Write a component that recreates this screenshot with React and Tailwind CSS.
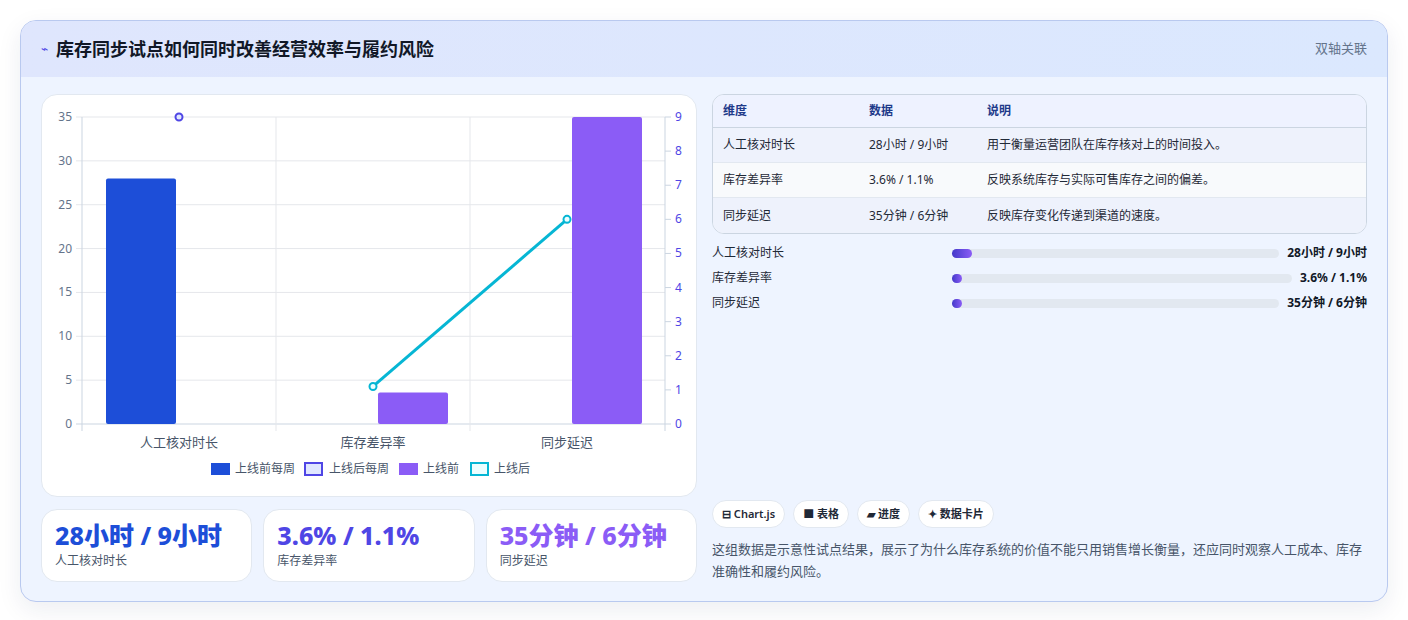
import React from "react";

const font = { fontFamily: '"Noto Sans", "Noto Sans CJK SC", sans-serif' };

const rows = [
  { k: "人工核对时长", v: "28小时 / 9小时", d: "用于衡量运营团队在库存核对上的时间投入。", w: "6%" },
  { k: "库存差异率", v: "3.6% / 1.1%", d: "反映系统库存与实际可售库存之间的偏差。", w: "2%" },
  { k: "同步延迟", v: "35分钟 / 6分钟", d: "反映库存变化传递到渠道的速度。", w: "1.5%" },
];

const Chart = () => {
  const L = 40, R = 623, T = 22, B = 329;
  const yl = (v) => B - (v / 35) * (B - T);
  const yr = (v) => B - (v / 9) * (B - T);
  const cx = [137, 331, 525];
  return (
    <svg width="656" height="403" className="block">
      {[0, 5, 10, 15, 20, 25, 30, 35].map((v) => (
        <g key={v}>
          <line x1={L - 6} x2={R} y1={yl(v)} y2={yl(v)} stroke={v === 0 ? "#cbd5e1" : "#e5e7eb"} />
          <text x={L - 10} y={yl(v) + 4} fontSize="12" textAnchor="end" fill="#64748b">{v}</text>
        </g>
      ))}
      {[0, 1, 2, 3, 4, 5, 6, 7, 8, 9].map((v) => (
        <g key={v}>
          <line x1={R} x2={R + 6} y1={yr(v)} y2={yr(v)} stroke="#cbd5e1" />
          <text x={R + 10} y={yr(v) + 4} fontSize="12" fill="#4f46e5">{v}</text>
        </g>
      ))}
      {[L, 234, 428, R].map((x) => (
        <line key={x} x1={x} x2={x} y1={T} y2={B + 7} stroke={x === L || x === R ? "#cbd5e1" : "#e5e7eb"} />
      ))}
      <rect x="64" y={yl(28)} width="70" height={B - yl(28)} fill="#1d4ed8" rx="2" />
      <rect x="336" y={yl(3.6)} width="70" height={B - yl(3.6)} fill="#8b5cf6" rx="2" />
      <rect x="530" y={yl(35)} width="70" height={B - yl(35)} fill="#8b5cf6" rx="2" />
      <line x1={cx[1]} y1={yr(1.1)} x2={cx[2]} y2={yr(6)} stroke="#06b6d4" strokeWidth="3" />
      <circle cx={cx[0]} cy={yr(9)} r="3.5" fill="#e0e7ff" stroke="#4f46e5" strokeWidth="2" />
      <circle cx={cx[1]} cy={yr(1.1)} r="3.5" fill="#ecfeff" stroke="#06b6d4" strokeWidth="2" />
      <circle cx={cx[2]} cy={yr(6)} r="3.5" fill="#ecfeff" stroke="#06b6d4" strokeWidth="2" />
      {["人工核对时长", "库存差异率", "同步延迟"].map((t, i) => (
        <text key={t} x={cx[i]} y="352" fontSize="13" textAnchor="middle" fill="#475569">{t}</text>
      ))}
      <g fontSize="12" fill="#475569">
        <rect x="169" y="368" width="19" height="12" fill="#1d4ed8" />
        <text x="193" y="378">上线前每周</text>
        <rect x="263" y="368" width="17" height="12" fill="#e0e7ff" stroke="#4f46e5" strokeWidth="2" />
        <text x="287" y="378">上线后每周</text>
        <rect x="357" y="368" width="19" height="12" fill="#8b5cf6" />
        <text x="381" y="378">上线前</text>
        <rect x="429" y="368" width="17" height="12" fill="#ecfeff" stroke="#06b6d4" strokeWidth="2" />
        <text x="452" y="378">上线后</text>
      </g>
    </svg>
  );
};

export default function App() {
  return (
    <div className="bg-white p-5 min-h-[620px]" style={font}>
      <div className="rounded-2xl border border-[#b9c9ef] bg-[#eef4ff] overflow-hidden shadow-[0_8px_24px_rgba(30,41,89,0.08)]">
        <div className="h-14 flex items-center justify-between px-5 bg-gradient-to-r from-[#dfe6fd] to-[#dbe8fe]">
          <div className="flex items-center gap-2">
            <span className="text-[#4f46e5] text-xs">⌁</span>
            <h1 className="text-lg font-bold text-[#111827]">库存同步试点如何同时改善经营效率与履约风险</h1>
          </div>
          <span className="text-[13px] text-[#64748b]">双轴关联</span>
        </div>
        <div className="flex gap-[15px] px-5 pt-[17px] pb-[19px]">
          <div className="w-[656px] flex flex-col gap-3">
            <div className="bg-white rounded-2xl border border-[#e2e8f0] h-[403px]">
              <Chart />
            </div>
            <div className="grid grid-cols-3 gap-[11px]">
              {[
                ["28小时 / 9小时", "人工核对时长", "text-[#1d4ed8]"],
                ["3.6% / 1.1%", "库存差异率", "text-[#4f46e5]"],
                ["35分钟 / 6分钟", "同步延迟", "text-[#8b5cf6]"],
              ].map(([v, l, c]) => (
                <div key={l} className="bg-white rounded-2xl border border-[#e2e8f0] h-[73px] px-[13px] pt-[9px]">
                  <div className={`text-[25px] leading-8 font-extrabold ${c}`}>{v}</div>
                  <div className="text-xs text-[#475569] mt-0.5">{l}</div>
                </div>
              ))}
            </div>
          </div>
          <div className="flex-1 flex flex-col">
            <div className="rounded-xl border border-[#cbd5e1] overflow-hidden bg-[#f8fafc] text-xs">
              <div className="flex h-[33px] items-center font-semibold text-[#1e3a8a] bg-[#eef2ff] border-b border-[#cbd5e1]">
                <div className="w-[156px] pl-[10px]">维度</div>
                <div className="w-[118px]">数据</div>
                <div>说明</div>
              </div>
              {rows.map((r, i) => (
                <div key={r.k} className={`flex h-[35px] items-center text-[#1f2937] ${i === 1 ? "bg-[#f8fafc]" : "bg-[#eef2fc]"} ${i < 2 ? "border-b border-[#e2e8f0]" : ""}`}>
                  <div className="w-[156px] pl-[10px]">{r.k}</div>
                  <div className="w-[118px]">{r.v}</div>
                  <div>{r.d}</div>
                </div>
              ))}
            </div>
            <div className="flex flex-col gap-[9px] mt-[11px] text-xs">
              {rows.map((r) => (
                <div key={r.k} className="flex items-center h-[16px]">
                  <div className="w-[240px] text-[#1f2937]">{r.k}</div>
                  <div className="flex-1 h-[9px] rounded-full bg-[#e2e8f0] mr-2">
                    <div className="h-full rounded-full bg-gradient-to-r from-[#4338ca] to-[#8b5cf6] min-w-[10px]" style={{ width: r.w }} />
                  </div>
                  <div className="font-bold text-[#111827] whitespace-nowrap">{r.v}</div>
                </div>
              ))}
            </div>
            <div className="flex-1" />
            <div className="flex gap-2 text-[11px] font-semibold text-[#1f2937]">
              {["⊟ Chart.js", "■ 表格", "▰ 进度", "✦ 数据卡片"].map((t) => (
                <span key={t} className="bg-white rounded-full border border-[#e2e8f0] px-[9px] h-[28px] flex items-center">{t}</span>
              ))}
            </div>
            <p className="mt-[10px] text-[13px] leading-[22px] text-[#475569]">
              这组数据是示意性试点结果，展示了为什么库存系统的价值不能只用销售增长衡量，还应同时观察人工成本、库存准确性和履约风险。
            </p>
          </div>
        </div>
      </div>
    </div>
  );
}
